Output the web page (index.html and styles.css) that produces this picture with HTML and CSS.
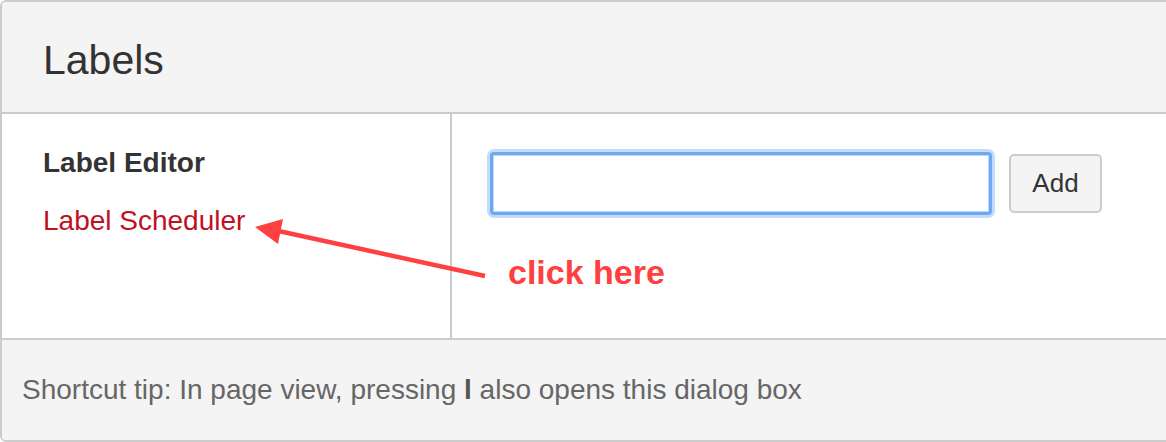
FILE: index.html
```html
<!DOCTYPE html>
<html lang="en">
<head>
  <meta charset="UTF-8" />
  <title>Labels</title>
  <link rel="stylesheet" href="styles.css">
</head>
<body>

  <div class="dialog">
    <header class="dialog-header">
      <h1>Labels</h1>
    </header>

    <div class="dialog-body">
      <nav class="side-menu">
        <div class="menu-item active">Label Editor</div>
        <a class="menu-item" href="#">Label Scheduler</a>
      </nav>
      <div class="editor">
        <div class="add-row">
          <input type="text" class="label-input" />
          <button class="add-button">Add</button>
        </div>
      </div>
    </div>

    <footer class="dialog-footer">
      <p>Shortcut tip: In page view, pressing <b>l</b> also opens this dialog box</p>
    </footer>

    <!-- annotation drawn over the dialog -->
    <div class="annotation">
      <svg class="arrow" width="240" height="60" viewBox="0 0 240 60">
        <line x1="231" y1="58" x2="20" y2="12" stroke="#ff4040" stroke-width="4.5" />
        <polygon points="1,9 29,1 24,26" fill="#ff4040" />
      </svg>
      <span class="annotation-text">click here</span>
    </div>
  </div>

</body>
</html>
```

FILE: styles.css
```css
html, body {
  margin: 0;
  overflow: hidden;
}

body {
  font-family: 'Liberation Sans', Arial, sans-serif;
  background-color: #ffffff;
  color: #333;
}

.dialog {
  position: relative;
  width: 1180px;
  border: 2px solid #cccccc;
  border-radius: 6px;
  overflow: hidden;
}

.dialog-header {
  background-color: #f4f4f4;
  height: 112px;
  box-sizing: border-box;
  padding: 6px 0 0 41px;
  display: flex;
  align-items: center;
  border-bottom: 2px solid #cccccc;
}

.dialog-header h1 {
  margin: 0;
  font-size: 41px;
  font-weight: normal;
  color: #333;
}

.dialog-body {
  display: flex;
  height: 224px;
}

.side-menu {
  width: 407px;
  padding: 32px 0 0 41px;
  border-right: 2px solid #cccccc;
  display: flex;
  flex-direction: column;
  gap: 24px;
}

.menu-item {
  font-size: 28px;
  line-height: 1.2;
  color: #c0111f;
  text-decoration: none;
}

.menu-item.active {
  font-weight: bold;
  color: #333;
}

.editor {
  flex: 1;
  padding: 35px 0 0 35px;
}

.add-row {
  display: flex;
  align-items: center;
  gap: 14px;
}

.label-input {
  width: 502px;
  height: 63px;
  box-sizing: border-box;
  border: 3px solid #6ea8f2;
  border-radius: 4px;
  box-shadow: 0 0 0 3px #c4dcfa, inset 0 0 0 1px #bcd6f8;
  outline: none;
  font-size: 24px;
  padding: 0 10px;
  margin: 3px;
}

.add-button {
  width: 93px;
  height: 59px;
  background-color: #f4f4f4;
  border: 2px solid #cccccc;
  border-radius: 5px;
  font-family: 'Liberation Sans', Arial, sans-serif;
  font-size: 26px;
  color: #333;
  cursor: pointer;
}

.dialog-footer {
  background-color: #f4f4f4;
  border-top: 2px solid #cccccc;
  height: 100px;
  padding-left: 20px;
  display: flex;
  align-items: center;
  font-size: 28px;
  color: #666;
}

.dialog-footer p {
  margin: 0;
}

.dialog-footer b {
  color: #555;
}

.annotation {
  position: absolute;
  left: 252px;
  top: 216px;
}

.arrow {
  display: block;
}

.annotation-text {
  position: absolute;
  left: 254px;
  top: 35px;
  font-size: 34px;
  font-weight: bold;
  color: #ff4040;
  white-space: nowrap;
}
```
